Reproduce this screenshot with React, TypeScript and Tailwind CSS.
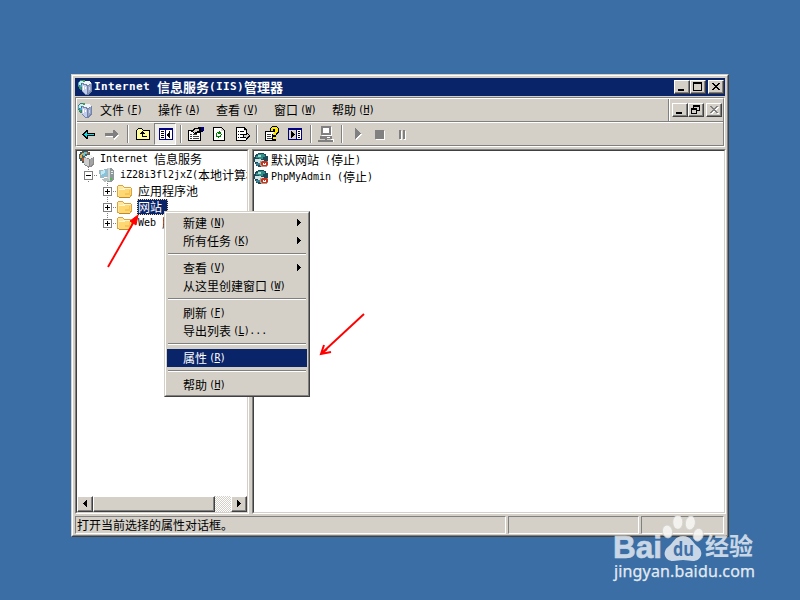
import React from 'react';

const CJK = /([\u3000-\u9fff]+)/;

// Mixed text: ideographs on a 12px grid, latin characters on a 6px grid.
function T({ s, u }: { s: string; u?: string }) {
  return (
    <span className="flex h-4 items-center whitespace-pre leading-4">
      {s.split(CJK).filter(Boolean).map((p, i) =>
        CJK.test(p) ? (
          <span key={i} className="font-['Noto_Sans_CJK_SC',sans-serif] text-[12px]">{p}</span>
        ) : (
          <span key={i} className="font-['DejaVu_Sans_Mono',monospace] text-[10px] tracking-[-0.02px]">{p}</span>
        )
      )}
      {u && (
        <span className="pl-[2px] font-['DejaVu_Sans_Mono',monospace] text-[10px] tracking-[-0.6px]">
          (<span className="underline underline-offset-1">{u}</span>)
        </span>
      )}
    </span>
  );
}

const raised =
  'border border-t-white border-l-white border-r-[#404040] border-b-[#404040] shadow-[inset_-1px_-1px_0_#808080] bg-[#d4d0c8]';

type SvgProps = { w?: number; h?: number; className?: string; children: React.ReactNode };
function Svg({ w = 16, h = 16, className = '', children }: SvgProps) {
  return (
    <svg width={w} height={h} viewBox={`0 0 ${w} ${h}`} className={`block shrink-0 ${className}`} shapeRendering="crispEdges">
      {children}
    </svg>
  );
}

function ServerIcon() {
  return (
    <Svg>
      <path d="M3 1h5v1h2v3H7v5H5v1H3v-1H2V8H1V3h1V2h1z" fill="#397b84" />
      <path d="M3 2h3v2H4v2H2V3h1z" fill="#c8eef0" />
      <path d="M6 1h2v2H6zM2 7h2v3H3V9H2z" fill="#3fa34d" />
      <path d="M1 4h1v3H1zM3 6h2v2H3z" fill="#56a4d8" />
      <path d="M5 4l4-2h3l3 2v9l-4 3H9l-4-3z" fill="#7483a8" />
      <path d="M5 4l4-2h3l3 2-4 2z" fill="#f1f4fb" />
      <path d="M5 5l5 2v8H9l-4-3z" fill="#c3cdec" />
      <path d="M6 7h1v4H6zM8 8h1v2H8z" fill="#fff" />
      <path d="M11 7l3-2v7l-3 2z" fill="#98a4c6" />
      <path d="M12 8h1v3h-1z" fill="#c9d0e4" />
    </Svg>
  );
}

function GrayServer() {
  return (
    <Svg>
      <path d="M3 0h6v1h2v4H7v6H5v1H3v-2H1V8H0V3h1V1h2z" fill="#3d5f63" />
      <path d="M3 2h2v2H3v3H1V4h1V3h1z" fill="#e5a94a" />
      <path d="M5 1h3v2H6v2H4V3h1z" fill="#6fc3d0" />
      <path d="M8 1h2v2H8zM3 7h2v3H3z" fill="#b6552a" />
      <path d="M5 6l4-2h3l3 2v8l-3 2H9l-4-2z" fill="#8a8a8a" />
      <path d="M5 6l4-2h3l3 2-4 2z" fill="#f4f4f4" />
      <path d="M5 7l5 1v7H9l-4-2z" fill="#cdcdcd" />
      <path d="M11 8l3-1v6l-3 2z" fill="#a4a4a4" />
    </Svg>
  );
}

function ComputerIcon() {
  return (
    <Svg>
      <path d="M9 1h4l3 2v10l-3 2H9z" fill="#8f9899" />
      <path d="M9 1h3v13H9z" fill="#cdd5d6" />
      <path d="M13 4h2v1h-2zM13 6h2v1h-2z" fill="#e8eeee" />
      <path d="M1 3l9-1v8l-8 1z" fill="#a7b6ba" />
      <path d="M2 4l7-1v6l-6 1z" fill="#86c4dc" />
      <path d="M3 4l4-1v3L3 8z" fill="#c3e8f4" />
      <path d="M3 12l6-1 3 2-6 2z" fill="#b8c0c0" />
      <path d="M12 11h2v2h-2z" fill="#53b953" />
    </Svg>
  );
}

function Folder() {
  return (
    <Svg>
      <path d="M0 3h1V2h5v1h1v1h7v1h1v8h-1v1h-1v1H2v-1H0z" fill="#d9a441" />
      <path d="M1 3h5v1h1v1h6v8H1z" fill="#ffe79c" />
      <path d="M2 6h4v-1h8v7h-1v2H2z" fill="#ffd873" />
      <path d="M2 6h4v-1h8v1H8v1H2z" fill="#fff6c8" />
      <path d="M12 7h1v5h-1zM8 10h4v2H8z" fill="#f7c65a" />
      <path d="M2 14h11v1H2z" fill="#c08a2c" />
    </Svg>
  );
}

function SiteIcon() {
  return (
    <Svg>
      <path d="M4 1h6v1h2v2h2v6h-2v3H9v2H4v-1H2v-2H1v-2H0V5h1V3h1V2h2z" fill="#1d4a58" />
      <path d="M4 2h6v1h1v2H9v2H5V6H2V4h2z" fill="#2f8f86" />
      <path d="M4 3h3v2H4z" fill="#a6dcd4" />
      <path d="M1 7h6v1h3v2H8v1H4v-1H1z" fill="#d5e4e4" />
      <path d="M2 11h4v2H4v1H3v-1H2z" fill="#3d7d94" />
      <path d="M6 9h8v5h-1v1H7v-1H6z" fill="#b99a84" />
      <path d="M8 9h5v1h1v3h-1v1H8v-1H7v-3h1z" fill="#c63522" />
      <path d="M9 11h3v2H9z" fill="#fff" />
      <path d="M10 11h1v1h-1z" fill="#c63522" />
    </Svg>
  );
}

function Expander({ open = false }: { open?: boolean }) {
  return (
    <Svg w={14} h={16}>
      <path d="M0.5 4.5h8v8h-8z" fill="#fff" stroke="#808080" />
      <path d="M2 8h5v1H2z" fill="#000" />
      {!open && <path d="M4 6h1v5H4z" fill="#000" />}
      <path d="M10 8h1v1h-1zM12 8h1v1h-1z" fill="#808080" />
      <path d="M4 0h1v1H4zM4 2h1v1H4zM4 14h1v1H4z" fill="#808080" />
    </Svg>
  );
}

type Glyph = 'min' | 'max' | 'close' | 'restore' | 'off';
const cross = 'M3 2h2v1h1v1h2V3h1V2h2v1h-1v1H9v1H8v1h1v1h1v1h1v1H9V8H8V7H6v1H5v1H3V8h1V7h1V6h1V5H5V4H4V3H3z';
function WinBtn({ g }: { g: Glyph }) {
  return (
    <div className={`h-[14px] w-4 ${raised}`}>
      <Svg w={14} h={12}>
        {g === 'min' && <path d="M3 8h6v2H3z" />}
        {g === 'max' && <path d="M2 1h9v9H2zM3 3v6h7V3z" fillRule="evenodd" />}
        {g === 'restore' && (
          <path d="M4 1h7v6H8v3H2V4h2zM5 3v1h3v2h2V3zM3 6v3h4V6z" fillRule="evenodd" />
        )}
        {g === 'close' && <path d={cross} />}
        {g === 'off' && (
          <>
            <path transform="translate(1 1)" fill="#fff" d={cross} />
            <path fill="#808080" d={cross} />
          </>
        )}
      </Svg>
    </div>
  );
}

function Sep({ className = '' }: { className?: string }) {
  return <div className={`h-[18px] w-[2px] shrink-0 border-l border-[#808080] bg-white ${className}`} />;
}

function Toolbar() {
  return (
    <div className="flex h-[22px] items-center pl-[4px]">
      <Svg>
        <path d="M1 8h1V7h1V6h1V5h1V4h2v3h7v3H7v3H5v-1H4v-1H3v-1H2V9H1z" />
        <path d="M3 8h1V7h1V6h1v2h7v1H6v2H5v-1H4V9H3z" fill="#00e5f0" />
      </Svg>
      <Svg className="ml-[7px]">
        <path d="M2 8h8V5h1v1h1v1h1v1h1v1h1v1h-1v1h-1v1h-1v1h-1v1h-1v-3H2z" fill="#fff" />
        <path d="M1 7h8V4h2v1h1v1h1v1h1v2h-1v1h-1v1h-1v1H9V10H1z" fill="#808080" />
      </Svg>
      <Sep className="ml-[7px]" />
      <Svg className="ml-[6px]">
        <path d="M1 4h1V3h1V2h4v1h1v1h7v10H1z" />
        <path d="M2 4h1V3h4v1h1v1h6v8H2z" fill="#fdfd9a" />
        <path d="M5 7h1V6h1V5h1v1h1v1h1v1H8v2h4v1H7V8H5z" />
      </Svg>
      <div className="ml-[3px] flex h-[22px] w-[22px] items-center justify-center border border-t-[#808080] border-l-[#808080] border-r-white border-b-white bg-[#eeece6] pl-[2px]">
        <Svg>
          <path d="M1 2h14v12H1z" fill="#000080" />
          <path d="M2 4h5v9H2zM8 4h6v9H8z" fill="#fff" />
          <path d="M3 5h3v1H3zM3 7h3v1H3zM3 9h3v1H3zM3 11h3v1H3zM11 5h1v7h-1V11h-1v-1H9V8h1V7h1z" />
        </Svg>
      </div>
      <Sep className="ml-[4px]" />
      <Svg w={18} className="ml-[5px]">
        <path d="M1 4h13v11H1z" />
        <path d="M2 5h11v9H2z" fill="#fff" />
        <path d="M3 8h2v1H3zM6 8h4v1H6zM3 10h2v1H3zM6 10h6v1H6zM3 12h2v1H3zM6 12h6v1H6z" fill="#404040" />
        <path d="M4 5h1V4h1V3h1V2h4V1h3v1h2v4h-3v1h-3v1H7V7H6V6H4z" />
        <path d="M6 5h1V4h1V3h4v2h-2v1H8v1H7V6H6z" fill="#d4d0c8" />
        <path d="M14 1h3v4h-3z" fill="#000080" />
      </Svg>
      <Svg className="ml-[6px]">
        <path d="M2 1h9v1h1v1h1v1h1v11H2z" />
        <path d="M3 2h7v3h3v9H3z" fill="#fff" />
        <path d="M10 2v3h3V4h-1V3h-1V2z" fill="#d4d0c8" />
        <path d="M7 6h1V5h1v1h1v2h1v1h-1V8H7V7H6v2H5V7h1V6zM5 9h1v1h3V9h1v2H8v1H7v-1H5z" fill="#008000" />
      </Svg>
      <Svg w={17} className="ml-[8px]">
        <path d="M1 1h9v1h1v1h1v4h-1V4H9V2H2v12h7v1H1z" />
        <path d="M2 2h7v3h2v9H2z" fill="#fff" />
        <path d="M3 5h1v1H3zM5 5h4v1H5zM3 8h1v1H3zM5 8h5v1H5zM3 11h1v1H3zM5 11h5v1H5zM2 14h9v1H2z" />
        <path d="M8 8h3V6h1v1h1v1h1v1h1v2h-1v1h-1v1h-1v1h-1v-2H8z" />
        <path d="M9 9h3V8h1v1h1v1h-1v1h-1v1h-1v-1H9z" fill="#d4d0c8" />
      </Svg>
      <Sep className="ml-[4px]" />
      <Svg className="ml-[6px]">
        <path d="M1 5h11v10H1z" />
        <path d="M2 6h9v8H2z" fill="#fff" />
        <path d="M3 8h4v1H3zM3 10h4v1H3zM3 12h7v1H3z" fill="#404040" />
        <path d="M6 2h1V1h1V0h5v1h1v1h1v5h-1v1h-1v1h-1v5H8V8h1V7h1V6H6z" />
        <path d="M7 2h1V1h5v1h1v4h-1v1h-1v2H9V7h1V6h1V3H9v2H7zM9 11h3v2H9z" fill="#ffe800" />
      </Svg>
      <Svg className="ml-[7px]">
        <path d="M1 2h14v12H1z" fill="#000080" />
        <path d="M10 4h4v9h-4z" fill="#fff" />
        <path d="M2 4h7v9H2z" fill="#d4d0c8" />
        <path d="M4 5h1v1h1v1h1v1h1v1H7v1H6v1H5v1H4zM11 5h2v1h-2zM11 7h2v1h-2zM11 9h2v1h-2zM11 11h2v1h-2z" />
      </Svg>
      <Sep className="ml-[7px]" />
      <Svg w={18} h={18} className="ml-[5px]">
        <path d="M5 2h10v9h-1v3h3v3H2v-1h12v-2H5z" fill="#fff" />
        <path d="M4 1h10v9H4zM6 3v5h6V3zM3 11h12v3H3zM8 14h2v1h6v2H1v-2h7z" fill="#808080" fillRule="evenodd" />
        <path d="M6 4h4v1H6zM10 12h3v1h-3z" fill="#fff" />
      </Svg>
      <Sep className="ml-[6px]" />
      <Svg w={9} h={14} className="ml-[11px]">
        <path d="M2 2h1v1h1v1h1v1h1v1h1v1h1v1H7v1H6v1H5v1H4v1H3v1H2z" fill="#fff" />
        <path d="M1 1h1v1h1v1h1v1h1v1h1v1h1v1H6v1H5v1H4v1H3v1H2v1H1z" fill="#808080" />
      </Svg>
      <div className="ml-[12px] h-[9px] w-[9px] bg-[#808080] shadow-[1px_1px_0_#fff]" />
      <div className="ml-[15px] flex gap-[2px]">
        <div className="h-[9px] w-[2px] bg-[#808080] shadow-[1px_1px_0_#fff]" />
        <div className="h-[9px] w-[2px] bg-[#808080] shadow-[1px_1px_0_#fff]" />
      </div>
    </div>
  );
}

function Menus() {
  const items = [['文件', 'F'], ['操作', 'A'], ['查看', 'V'], ['窗口', 'W'], ['帮助', 'H']];
  return (
    <div className="flex h-[22px] items-center">
      <div className="mr-[7px]"><ServerIcon /></div>
      {items.map(([a, b]) => (
        <div key={a} className="w-[58px]"><T s={a} u={b} /></div>
      ))}
      <div className="ml-auto flex h-[22px] items-center border-l border-[#808080] pr-[1px]">
        <div className="mr-[2px] h-full w-px bg-white" />
        <WinBtn g="min" /><WinBtn g="restore" />
        <div className="w-[2px]" />
        <WinBtn g="off" />
      </div>
    </div>
  );
}

function Tree() {
  return (
    <div className="flex h-full w-[174px] flex-col border border-[#808080] border-r-white border-b-white">
      <div className="flex min-h-0 flex-1 flex-col overflow-hidden border border-[#404040] border-r-[#d4d0c8] border-b-[#d4d0c8] bg-white">
        <div className="h-[345px] w-[170px] overflow-hidden">
          <div className="flex h-4 items-center gap-[5px] pl-[2px]"><GrayServer /><T s="Internet 信息服务" /></div>
          <div className="flex h-4 items-center pl-[7px]"><Expander open /><ComputerIcon /><div className="pl-[6px]"><T s="iZ28i3fl2jxZ(本地计算机)" /></div></div>
          <div className="flex h-4 items-center pl-[26px]"><Expander /><Folder /><div className="pl-[5px]"><T s="应用程序池" /></div></div>
          <div className="flex h-4 items-center pl-[26px]">
            <Expander /><Folder />
            <div className="ml-[4px] w-[31px] bg-[#0a246a] pl-px text-white outline-1 -outline-offset-1 outline-dotted outline-[#f5db95]"><T s="网站" /></div>
          </div>
          <div className="flex h-4 items-center pl-[26px]"><Expander /><Folder /><div className="pl-[5px]"><T s="Web 服务扩展" /></div></div>
        </div>
        <div className="flex h-4 bg-[repeating-conic-gradient(#fff_0_25%,#d4d0c8_0_50%)] bg-[length:2px_2px]">
          <div className={`h-4 w-4 ${raised}`}><Svg w={14} h={14}><path d="M8 3h1v7H8V9H7V8H6V7H5V6h1V5h1V4h1z" /></Svg></div>
          <div className={`h-4 w-[122px] ${raised}`} />
          <div className={`ml-auto h-4 w-4 ${raised}`}><Svg w={14} h={14}><path d="M5 3h1v1h1v1h1v1h1v1H8v1H7v1H6v1H5z" /></Svg></div>
        </div>
      </div>
    </div>
  );
}

function List() {
  return (
    <div className="ml-[3px] h-full w-[474px] border border-[#808080] border-r-white border-b-white">
      <div className="h-full border border-[#404040] border-r-[#d4d0c8] border-b-[#d4d0c8] bg-white">
        <div className="flex h-[17px] items-center gap-px"><SiteIcon /><T s="默认网站 (停止)" /></div>
        <div className="flex h-[17px] items-center gap-px"><SiteIcon /><T s="PhpMyAdmin (停止)" /></div>
      </div>
    </div>
  );
}

type Item = { s: string; u: string; sub?: boolean; tail?: string; on?: boolean };
const menuGroups: Item[][] = [
  [{ s: '新建', u: 'N', sub: true }, { s: '所有任务', u: 'K', sub: true }],
  [{ s: '查看', u: 'V', sub: true }, { s: '从这里创建窗口', u: 'W' }],
  [{ s: '刷新', u: 'F' }, { s: '导出列表', u: 'L', tail: '...' }],
  [{ s: '属性', u: 'R', on: true }],
  [{ s: '帮助', u: 'H' }],
];

function ContextMenu() {
  return (
    <div className="absolute left-[164px] top-[211px] h-[186px] w-[146px] border border-t-[#d4d0c8] border-l-[#d4d0c8] border-r-[#404040] border-b-[#404040] bg-[#d4d0c8]">
      <div className="h-full border border-t-white border-l-white border-r-[#808080] border-b-[#808080] p-px">
        {menuGroups.map((g, i) => (
          <div key={i}>
            {i > 0 && <div className="flex h-[9px] items-center px-px pb-px"><div className="h-[2px] w-full border-t border-[#808080] bg-white" /></div>}
            {g.map((m) => (
              <div key={m.s} className={`flex h-[18px] items-center pl-4 pr-[6px] ${m.on ? 'bg-[#0a246a] text-white' : ''}`}>
                <T s={m.s} u={m.u} />
                {m.tail && <T s={m.tail} />}
                {m.sub && <Svg w={4} h={7} className="mb-[2px] ml-auto"><path d="M0 0h1v1h1v1h1v1h1v1H3v1H2v1H1v1H0z" /></Svg>}
              </div>
            ))}
          </div>
        ))}
      </div>
    </div>
  );
}

function Arrows() {
  return (
    <svg width="800" height="600" viewBox="0 0 800 600" className="absolute left-0 top-0" fill="none" stroke="#f00" strokeWidth="1.9">
      <path d="M108 267L136 218" />
      <path d="M138 215l-8 6 6 4z" fill="#f00" strokeWidth="1" />
      <path d="M364 314L323 352" />
      <path d="M324 345l-3 9 10-2M321 354l6-5" strokeWidth="2" />
    </svg>
  );
}

function Watermark() {
  return (
    <svg width="160" height="80" viewBox="0 0 160 80" className="absolute left-[604px] top-[510px]" fill="#fff">
      <g opacity="0.72">
        <text x="9" y="48" fontSize="31" fontWeight="700" textLength="49" lengthAdjust="spacingAndGlyphs" stroke="#fff" strokeWidth="0.6" className="font-['Liberation_Sans',sans-serif]">Bai</text>
        <path d="M79 26c8 0 10 7 14 10 8 6 4 15-4 15-4 0-6-1-10-1s-6 1-10 1c-8 0-12-9-4-15 4-3 6-10 14-10z" />
        <text x="101" y="45" fontSize="24" fontWeight="700" textLength="48" className="font-['Noto_Sans_CJK_SC',sans-serif]">经验</text>
      </g>
      <g fill="#f7f6f3" stroke="#d2d2cf" strokeWidth="0.8" opacity="0.9">
        <ellipse cx="63.500" cy="21.500" rx="5" ry="6.500" transform="rotate(-12 63.500 21.500)" />
        <ellipse cx="73.800" cy="12.300" rx="5" ry="7" />
        <ellipse cx="86.300" cy="13" rx="5" ry="7" transform="rotate(10 86.300 13)" />
        <ellipse cx="94.200" cy="24.700" rx="5" ry="6.500" transform="rotate(14 94.200 24.700)" />
      </g>
      <text x="69" y="46" fontSize="19" fontWeight="700" textLength="21" lengthAdjust="spacingAndGlyphs" fill="#3f70a7" className="font-['Open_Sans',sans-serif]">du</text>
      <text x="10" y="67" fontSize="16" textLength="141" opacity="0.86" stroke="#fff" strokeWidth="0.25" className="font-['Noto_Sans',sans-serif]">jingyan.baidu.com</text>
    </svg>
  );
}

const cell = 'h-[18px] border border-t-[#808080] border-l-[#808080] border-r-white border-b-white';

export default function App() {
  return (
    <div className="relative h-[600px] w-[800px] overflow-hidden bg-[#3a6ea5] pl-[71px] pt-[74px] text-black">
      <div className="h-[463px] w-[658px] border border-t-[#d4d0c8] border-l-[#d4d0c8] border-r-[#404040] border-b-[#404040] bg-[#d4d0c8]">
        <div className="flex h-full flex-col border border-t-white border-l-white border-r-[#808080] border-b-[#808080] p-[2px]">
          <div className="flex h-[18px] w-[650px] shrink-0 items-center bg-[#0a246a] pl-[2px] pr-px text-white">
            <ServerIcon />
            <div className="flex items-center whitespace-pre pl-px leading-4">
              <span className="font-['DejaVu_Sans_Mono',monospace] text-[11px] font-bold tracking-[0.38px]">{'Internet '}</span>
              <span className="font-['Noto_Sans_CJK_SC',sans-serif] text-[13px] font-bold">信息服务</span>
              <span className="font-['DejaVu_Sans_Mono',monospace] text-[11px] font-bold tracking-[0.38px]">(IIS)</span>
              <span className="font-['Noto_Sans_CJK_SC',sans-serif] text-[13px] font-bold">管理器</span>
            </div>
            <div className="ml-auto flex">
              <WinBtn g="min" /><WinBtn g="max" /><div className="w-[2px]" /><WinBtn g="close" />
            </div>
          </div>
          <div className="mt-px h-[50px] w-[650px] shrink-0 border border-t-[#808080] border-l-[#808080] border-r-white border-b-white">
            <div className="h-full border border-t-white border-l-white border-r-[#808080] border-b-[#808080]">
              <Menus />
              <div className="h-[2px] border-t border-[#808080] bg-white" />
              <Toolbar />
            </div>
          </div>
          <div className="mt-[2px] flex h-[365px] w-[651px] shrink-0"><Tree /><List /></div>
          <div className="mt-[2px] flex w-[650px] gap-[2px]">
            <div className={`w-[431px] pl-px ${cell}`}><T s="打开当前选择的属性对话框。" /></div>
            <div className={`w-[131px] ${cell}`} />
            <div className={`w-[83px] ${cell}`} />
          </div>
        </div>
      </div>
      <ContextMenu />
      <Arrows />
      <Watermark />
    </div>
  );
}
